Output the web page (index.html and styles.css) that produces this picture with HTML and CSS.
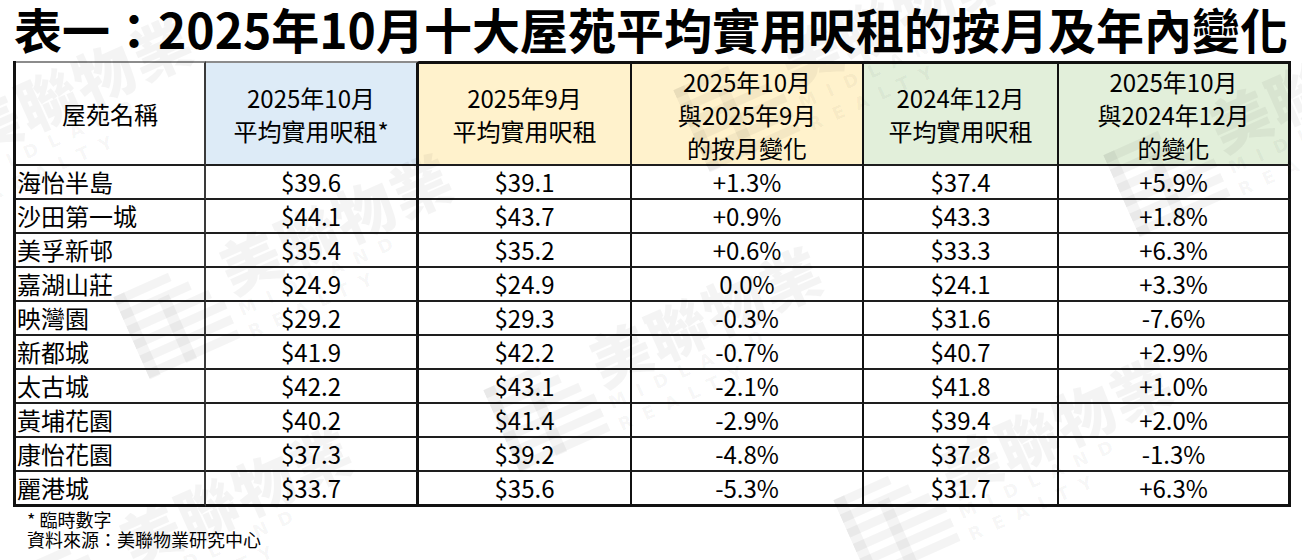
FILE: index.html
```html
<!DOCTYPE html>
<html lang="zh-Hant">
<head>
<meta charset="utf-8">
<title>表一</title>
<link rel="stylesheet" href="styles.css">
</head>
<body>
<div class="page">
  <h1 class="title">表一：2025年10月十大屋苑平均實用呎租的按月及年內變化</h1>
  <table class="rent">
    <thead>
      <tr>
        <th class="c1">屋苑名稱</th>
        <th class="c2 h-blue">2025年10月<br>平均實用呎租*</th>
        <th class="c3 h-yellow">2025年9月<br>平均實用呎租</th>
        <th class="c4 h-yellow">2025年10月<br>與2025年9月<br>的按月變化</th>
        <th class="c5 h-green">2024年12月<br>平均實用呎租</th>
        <th class="c6 h-green">2025年10月<br>與2024年12月<br>的變化</th>
      </tr>
    </thead>
    <tbody>
      <tr><td class="c1">海怡半島</td><td class="c2">$39.6</td><td class="c3">$39.1</td><td class="c4">+1.3%</td><td class="c5">$37.4</td><td class="c6">+5.9%</td></tr>
      <tr><td class="c1">沙田第一城</td><td class="c2">$44.1</td><td class="c3">$43.7</td><td class="c4">+0.9%</td><td class="c5">$43.3</td><td class="c6">+1.8%</td></tr>
      <tr><td class="c1">美孚新邨</td><td class="c2">$35.4</td><td class="c3">$35.2</td><td class="c4">+0.6%</td><td class="c5">$33.3</td><td class="c6">+6.3%</td></tr>
      <tr><td class="c1">嘉湖山莊</td><td class="c2">$24.9</td><td class="c3">$24.9</td><td class="c4">0.0%</td><td class="c5">$24.1</td><td class="c6">+3.3%</td></tr>
      <tr><td class="c1">映灣園</td><td class="c2">$29.2</td><td class="c3">$29.3</td><td class="c4">-0.3%</td><td class="c5">$31.6</td><td class="c6">-7.6%</td></tr>
      <tr><td class="c1">新都城</td><td class="c2">$41.9</td><td class="c3">$42.2</td><td class="c4">-0.7%</td><td class="c5">$40.7</td><td class="c6">+2.9%</td></tr>
      <tr><td class="c1">太古城</td><td class="c2">$42.2</td><td class="c3">$43.1</td><td class="c4">-2.1%</td><td class="c5">$41.8</td><td class="c6">+1.0%</td></tr>
      <tr><td class="c1">黃埔花園</td><td class="c2">$40.2</td><td class="c3">$41.4</td><td class="c4">-2.9%</td><td class="c5">$39.4</td><td class="c6">+2.0%</td></tr>
      <tr><td class="c1">康怡花園</td><td class="c2">$37.3</td><td class="c3">$39.2</td><td class="c4">-4.8%</td><td class="c5">$37.8</td><td class="c6">-1.3%</td></tr>
      <tr class="last"><td class="c1">麗港城</td><td class="c2">$33.7</td><td class="c3">$35.6</td><td class="c4">-5.3%</td><td class="c5">$31.7</td><td class="c6">+6.3%</td></tr>
    </tbody>
  </table>
  <div class="notes">
    <p>* 臨時數字</p>
    <p>資料來源：美聯物業研究中心</p>
  </div>

  <div class="wm" aria-hidden="true">
    <div class="wm-item wm-1">
      <svg class="wm-logo" viewBox="0 0 100 90"><g fill="currentColor"><rect x="0" y="0" width="60" height="9"/><rect x="0" y="16" width="75" height="9"/><rect x="0" y="32" width="90" height="9"/><rect x="0" y="48" width="100" height="9"/><rect x="0" y="64" width="100" height="9"/><rect x="0" y="80" width="100" height="9"/><rect x="0" y="0" width="12" height="90"/><rect x="40" y="20" width="12" height="70"/></g></svg>
      <div class="wm-text"><span class="wm-cn">美聯物業</span><span class="wm-en">MIDLAND REALTY</span></div>
    </div>
    <div class="wm-item wm-2">
      <svg class="wm-logo" viewBox="0 0 100 90"><g fill="currentColor"><rect x="0" y="0" width="60" height="9"/><rect x="0" y="16" width="75" height="9"/><rect x="0" y="32" width="90" height="9"/><rect x="0" y="48" width="100" height="9"/><rect x="0" y="64" width="100" height="9"/><rect x="0" y="80" width="100" height="9"/><rect x="0" y="0" width="12" height="90"/><rect x="40" y="20" width="12" height="70"/></g></svg>
      <div class="wm-text"><span class="wm-cn">美聯物業</span><span class="wm-en">MIDLAND REALTY</span></div>
    </div>
    <div class="wm-item wm-3">
      <svg class="wm-logo" viewBox="0 0 100 90"><g fill="currentColor"><rect x="0" y="0" width="60" height="9"/><rect x="0" y="16" width="75" height="9"/><rect x="0" y="32" width="90" height="9"/><rect x="0" y="48" width="100" height="9"/><rect x="0" y="64" width="100" height="9"/><rect x="0" y="80" width="100" height="9"/><rect x="0" y="0" width="12" height="90"/><rect x="40" y="20" width="12" height="70"/></g></svg>
      <div class="wm-text"><span class="wm-cn">美聯物業</span><span class="wm-en">MIDLAND REALTY</span></div>
    </div>
    <div class="wm-item wm-4">
      <svg class="wm-logo" viewBox="0 0 100 90"><g fill="currentColor"><rect x="0" y="0" width="60" height="9"/><rect x="0" y="16" width="75" height="9"/><rect x="0" y="32" width="90" height="9"/><rect x="0" y="48" width="100" height="9"/><rect x="0" y="64" width="100" height="9"/><rect x="0" y="80" width="100" height="9"/><rect x="0" y="0" width="12" height="90"/><rect x="40" y="20" width="12" height="70"/></g></svg>
      <div class="wm-text"><span class="wm-cn">美聯物業</span><span class="wm-en">MIDLAND REALTY</span></div>
    </div>
    <div class="wm-item wm-5">
      <svg class="wm-logo" viewBox="0 0 100 90"><g fill="currentColor"><rect x="0" y="0" width="60" height="9"/><rect x="0" y="16" width="75" height="9"/><rect x="0" y="32" width="90" height="9"/><rect x="0" y="48" width="100" height="9"/><rect x="0" y="64" width="100" height="9"/><rect x="0" y="80" width="100" height="9"/><rect x="0" y="0" width="12" height="90"/><rect x="40" y="20" width="12" height="70"/></g></svg>
      <div class="wm-text"><span class="wm-cn">美聯物業</span><span class="wm-en">MIDLAND REALTY</span></div>
    </div>
    <div class="wm-item wm-6">
      <svg class="wm-logo" viewBox="0 0 100 90"><g fill="currentColor"><rect x="0" y="0" width="60" height="9"/><rect x="0" y="16" width="75" height="9"/><rect x="0" y="32" width="90" height="9"/><rect x="0" y="48" width="100" height="9"/><rect x="0" y="64" width="100" height="9"/><rect x="0" y="80" width="100" height="9"/><rect x="0" y="0" width="12" height="90"/><rect x="40" y="20" width="12" height="70"/></g></svg>
      <div class="wm-text"><span class="wm-cn">美聯物業</span><span class="wm-en">MIDLAND REALTY</span></div>
    </div>
    <div class="wm-item wm-7">
      <svg class="wm-logo" viewBox="0 0 100 90"><g fill="currentColor"><rect x="0" y="0" width="60" height="9"/><rect x="0" y="16" width="75" height="9"/><rect x="0" y="32" width="90" height="9"/><rect x="0" y="48" width="100" height="9"/><rect x="0" y="64" width="100" height="9"/><rect x="0" y="80" width="100" height="9"/><rect x="0" y="0" width="12" height="90"/><rect x="40" y="20" width="12" height="70"/></g></svg>
      <div class="wm-text"><span class="wm-cn">美聯物業</span><span class="wm-en">MIDLAND REALTY</span></div>
    </div>
  </div>
</div>
</body>
</html>
```
FILE: styles.css
```css
* { box-sizing: border-box; }

html, body {
  margin: 0;
  padding: 0;
  background: #ffffff;
}

body {
  font-family: "Noto Sans CJK TC", "Noto Sans", sans-serif;
  color: #000;
}

.page {
  position: relative;
  width: 1302px;
  height: 560px;
  overflow: hidden;
}

.title {
  margin: 0;
  padding-left: 14px;
  height: 61px;
  font-size: 48px;
  font-weight: 700;
  line-height: 57px;
  white-space: nowrap;
}

.rent {
  margin-left: 13px;
  width: 1278px;
  border-collapse: separate;
  border-spacing: 0;
  table-layout: fixed;
  border-left: 3px solid #111;
  font-size: 24px;
}

.rent th,
.rent td {
  padding: 0;
  border-bottom: 2px solid #1e1e1e;
  text-align: center;
  vertical-align: middle;
  white-space: nowrap;
}

.rent th {
  height: 105px;
  font-weight: 400;
  line-height: 33px;
}

.rent td {
  height: 34px;
  line-height: 32px;
}

.rent .last td { border-bottom: 3px solid #111; height: 35px; }

.rent .c1 { width: 190px; border-right: 2px solid #3a3a3a; }
.rent .c2 { width: 213px; border-right: 3px solid #111; }
.rent .c3 { width: 213px; border-right: 2px solid #111; }
.rent .c4 { width: 232px; border-right: 2px solid #111; }
.rent .c5 { width: 195px; border-right: 2px solid #111; }
.rent .c6 { width: 232px; border-right: 3px solid #111; }

.rent th.c1, .rent th.c2 { border-top: 2px solid #8c8c8c; }
.rent th.c3, .rent th.c4, .rent th.c5, .rent th.c6 { border-top: 3px solid #111; }

.rent td.c1 { text-align: left; padding-left: 1px; }

.h-blue { background: #ddebf7; }
.h-yellow { background: #fff2cc; }
.h-green { background: #e2efda; }

.notes {
  padding: 2px 0 0 27px;
  font-size: 18px;
  line-height: 20px;
}

.notes p { margin: 0; }

/* watermark */
.wm {
  position: absolute;
  inset: 0;
  pointer-events: none;
  color: rgba(0, 0, 0, 0.045);
}

.wm-item {
  position: absolute;
  width: 380px;
  height: 110px;
  display: flex;
  align-items: center;
  gap: 10px;
  transform: rotate(-24deg);
  transform-origin: center center;
}

.wm-logo { width: 100px; height: 92px; flex: none; }

.wm-text { display: flex; flex-direction: column; }

.wm-cn {
  font-size: 60px;
  font-weight: 900;
  line-height: 62px;
  letter-spacing: 2px;
}

.wm-en {
  font-family: "DejaVu Sans", sans-serif;
  font-weight: 700;
  font-size: 18px;
  line-height: 24px;
  letter-spacing: 12px;
}

.wm-1 { left: 675px; top: -1px; }
.wm-2 { left: -145px; top: 69px; }
.wm-3 { left: 115px; top: 206px; }
.wm-4 { left: 485px; top: 299px; }
.wm-5 { left: 15px; top: 479px; }
.wm-6 { left: 835px; top: 409px; }
.wm-7 { left: 1105px; top: 64px; }
```
